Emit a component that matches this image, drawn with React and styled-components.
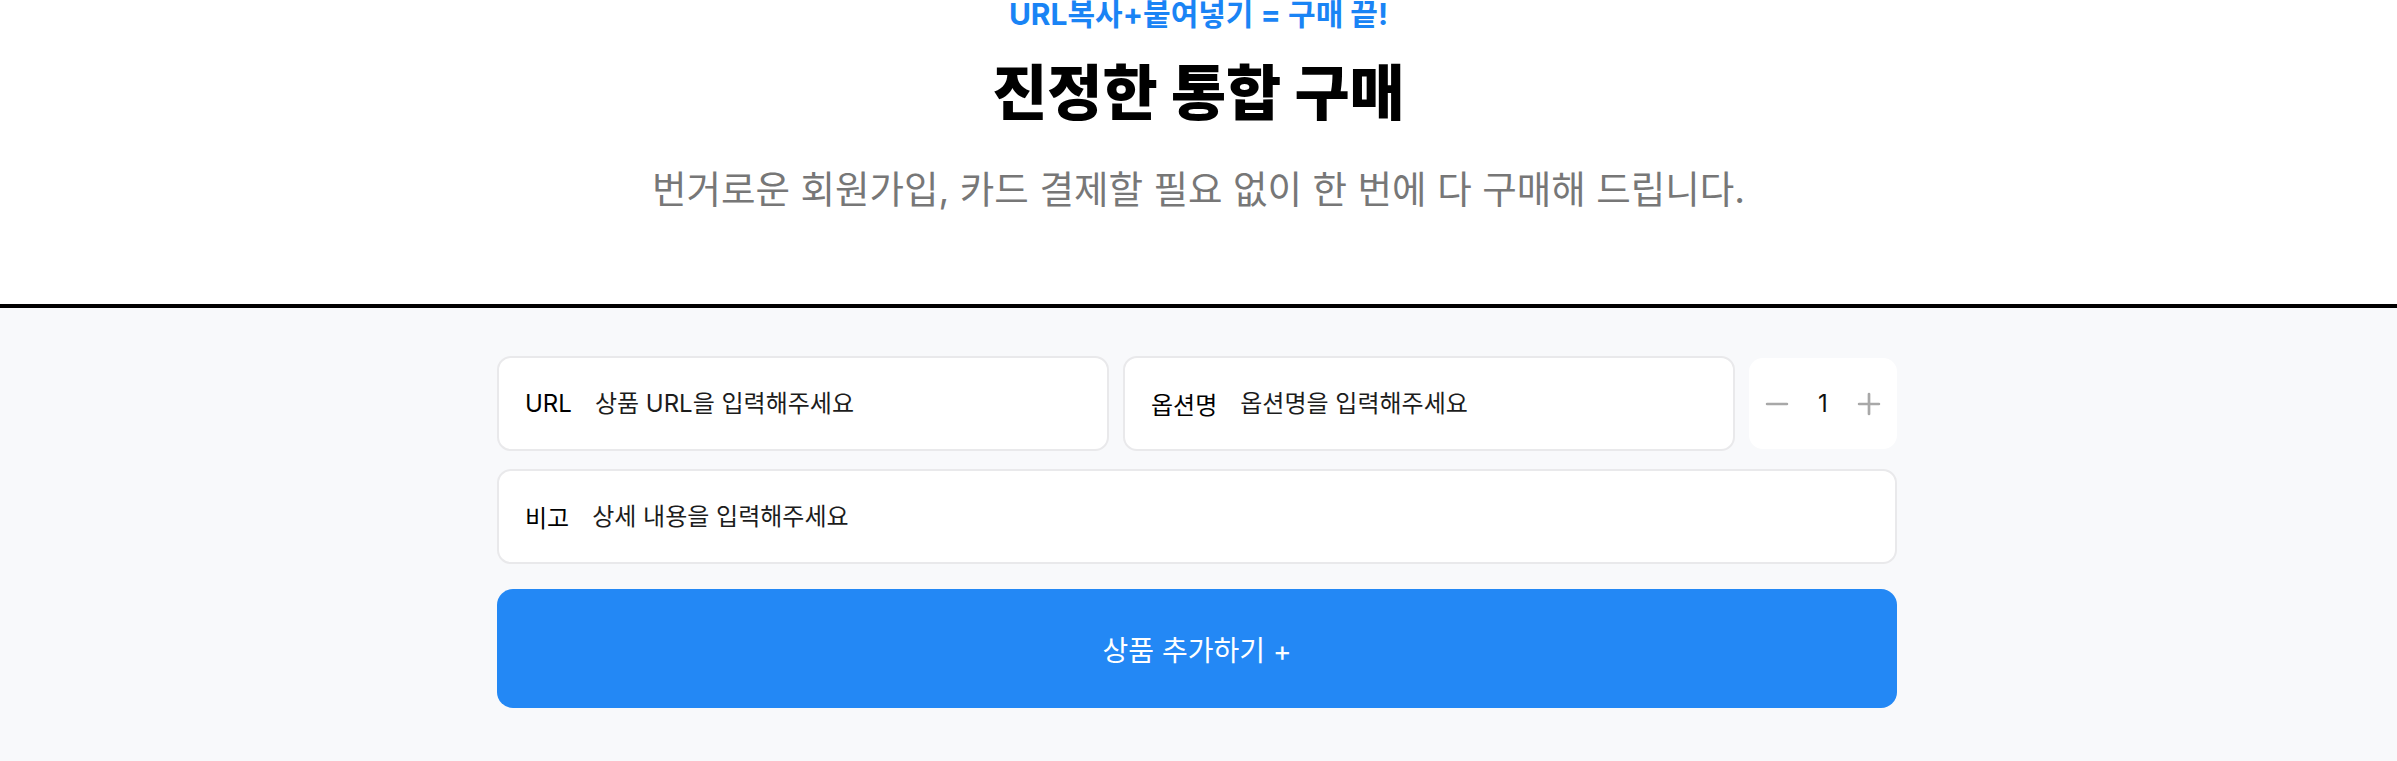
import React from 'react';
import styled, { createGlobalStyle } from 'styled-components';
import { Minus, Plus } from 'lucide-react';

const GlobalStyle = createGlobalStyle`
  html, body {
    margin: 0;
    padding: 0;
    background: #f8f9fb;
  }
  body {
    font-family: Inter, "Noto Sans CJK KR", "Noto Sans", sans-serif;
    color: #111;
  }
  * {
    box-sizing: border-box;
  }
`;

const Hero = styled.section`
  background: #ffffff;
  border-bottom: 4px solid #000;
  height: 308px;
  display: flex;
  flex-direction: column;
  align-items: center;
  text-align: center;
`;

const Tagline = styled.p`
  margin: -4px 0 0;
  font-size: 30px;
  line-height: 36px;
  font-weight: 700;
  color: #1a84f5;
`;

const Title = styled.h1`
  margin: 25px 0 0;
  font-size: 60px;
  line-height: 72px;
  font-weight: 800;
  color: #000;
`;

const Subtitle = styled.p`
  margin: 38px 0 0;
  font-size: 37.5px;
  line-height: 46px;
  font-weight: 400;
  color: #777;
`;

const FormSection = styled.section`
  padding: 48px 3px 54px 0;
`;

const Form = styled.div`
  width: 1400px;
  margin: 0 auto;
  display: flex;
  flex-direction: column;
`;

const Row = styled.div`
  display: flex;
  align-items: center;
  gap: 14px;
  margin-bottom: ${props => props.spacing || 0}px;
`;

const Field = styled.label`
  flex: 1;
  height: 95px;
  display: flex;
  align-items: center;
  gap: 23px;
  padding: 0 26px;
  background: #fff;
  border: 2px solid #e9e9eb;
  border-radius: 14px;
`;

const FieldLabel = styled.span`
  font-size: 24px;
  font-weight: 400;
  color: #000;
  white-space: nowrap;
`;

const FieldInput = styled.input`
  flex: 1;
  min-width: 0;
  border: none;
  outline: none;
  background: transparent;
  font-family: inherit;
  font-size: 24px;
  color: #111;
  padding: 0;

  &::placeholder {
    color: #1c1c1c;
  }
`;

const Counter = styled.div`
  width: 148px;
  height: 91px;
  flex-shrink: 0;
  display: flex;
  align-items: center;
  justify-content: space-between;
  padding: 0 11px;
  background: #fff;
  border-radius: 14px;
`;

const StepButton = styled.button`
  border: none;
  background: none;
  padding: 0;
  display: flex;
  align-items: center;
  color: #a8a8a8;
  cursor: pointer;
`;

const Count = styled.span`
  font-size: 24px;
  color: #111;
`;

const AddButton = styled.button`
  height: 119px;
  border: none;
  border-radius: 16px;
  background: #2388f5;
  color: #fff;
  font-family: inherit;
  font-size: 28px;
  font-weight: 400;
  cursor: pointer;
`;

export default function App() {
  return (
    <>
      <GlobalStyle />
      <Hero>
        <Tagline>URL복사+붙여넣기 = 구매 끝!</Tagline>
        <Title>진정한 통합 구매</Title>
        <Subtitle>번거로운 회원가입, 카드 결제할 필요 없이 한 번에 다 구매해 드립니다.</Subtitle>
      </Hero>
      <FormSection>
        <Form>
          <Row spacing={18}>
            <Field>
              <FieldLabel>URL</FieldLabel>
              <FieldInput placeholder="상품 URL을 입력해주세요" />
            </Field>
            <Field>
              <FieldLabel>옵션명</FieldLabel>
              <FieldInput placeholder="옵션명을 입력해주세요" />
            </Field>
            <Counter>
              <StepButton aria-label="minus">
                <Minus size={34} strokeWidth={1.9} />
              </StepButton>
              <Count>1</Count>
              <StepButton aria-label="plus">
                <Plus size={34} strokeWidth={1.9} />
              </StepButton>
            </Counter>
          </Row>
          <Row spacing={25}>
            <Field>
              <FieldLabel>비고</FieldLabel>
              <FieldInput placeholder="상세 내용을 입력해주세요" />
            </Field>
          </Row>
          <AddButton>상품 추가하기 +</AddButton>
        </Form>
      </FormSection>
    </>
  );
}
